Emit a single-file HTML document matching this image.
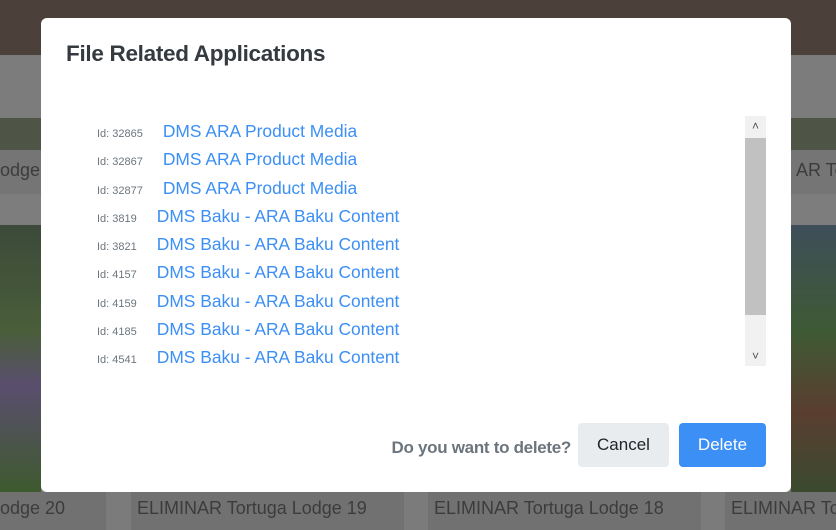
<!DOCTYPE html>
<html><head><style>
*{margin:0;padding:0;box-sizing:border-box}
body{width:836px;height:530px;overflow:hidden;position:relative;background:#7b7b7b;font-family:"Liberation Sans",sans-serif}
.a{position:absolute;white-space:nowrap}
.lbl{position:absolute;top:492px;height:38px;background:#717171;color:#3c3c3c;font-size:18px;line-height:32px;padding-left:6px;white-space:nowrap;overflow:hidden}
.row{position:absolute;left:97px;height:22px;white-space:nowrap}
.row .id{font-size:11px;color:#6c757d;display:inline-block;margin-right:20px}
.row .ln{font-size:17.4px;color:#3b8ff5}
</style></head><body>
<div class="a" style="left:0;top:0;width:836px;height:55px;background:#4b413a"></div>
<div class="a" style="left:0;top:55px;width:836px;height:63px;background:#7c7c7c"></div>
<div class="a" style="left:0;top:118px;width:836px;height:36px;background:#4e5446"></div>
<div class="a" style="left:0;top:150px;width:836px;height:44px;background:#757575"></div>
<div class="a" style="left:0;top:195px;width:836px;height:30px;background:#7d7d7d"></div>
<div class="a" style="left:0;top:225px;width:41px;height:267px;background:linear-gradient(#3c4a3a,#4a5e3a 40%,#5a4e6e 60%,#3e5a2e)"></div>
<div class="a" style="left:791px;top:225px;width:45px;height:267px;background:linear-gradient(#3e4e5a,#3e5a34 40%,#5a3e30 70%,#3a4a2e)"></div>
<div class="a" style="left:0;top:160px;font-size:18px;color:#3c3c3c">odge</div>
<div class="a" style="left:796px;top:160px;font-size:18px;color:#3c3c3c">AR To</div>
<div class="lbl" style="left:0;width:106px;padding-left:0">odge 20</div>
<div class="lbl" style="left:131px;width:273px">ELIMINAR Tortuga Lodge 19</div>
<div class="lbl" style="left:428px;width:273px">ELIMINAR Tortuga Lodge 18</div>
<div class="lbl" style="left:725px;width:111px">ELIMINAR Tortuga Lodge 17</div>

<div class="a" style="left:41px;top:18px;width:750px;height:474px;background:#fff;border-radius:6px">
  <div class="a" style="left:25px;top:23px;font-size:22.5px;font-weight:bold;color:#343a40;letter-spacing:-0.3px">File Related Applications</div>
  <div class="a" style="left:704px;top:98px;width:21px;height:250px;background:#f1f1f1">
    <div class="a" style="left:0;top:22px;width:21px;height:177px;background:#c1c1c1"></div>
    <div class="a" style="left:0;top:0;width:21px;height:20px;text-align:center;font-size:12px;color:#505050;line-height:20px">&#x2C4;</div>
    <div class="a" style="left:0;bottom:0;width:21px;height:20px;text-align:center;font-size:12px;color:#505050;line-height:20px">&#x2C5;</div>
  </div>
</div>
<div class="row" style="top:121px"><span class="id">Id: 32865</span><span class="ln">DMS ARA Product Media</span></div>
<div class="row" style="top:149px"><span class="id">Id: 32867</span><span class="ln">DMS ARA Product Media</span></div>
<div class="row" style="top:178px"><span class="id">Id: 32877</span><span class="ln">DMS ARA Product Media</span></div>
<div class="row" style="top:206px"><span class="id">Id: 3819</span><span class="ln">DMS Baku - ARA Baku Content</span></div>
<div class="row" style="top:234px"><span class="id">Id: 3821</span><span class="ln">DMS Baku - ARA Baku Content</span></div>
<div class="row" style="top:262px"><span class="id">Id: 4157</span><span class="ln">DMS Baku - ARA Baku Content</span></div>
<div class="row" style="top:291px"><span class="id">Id: 4159</span><span class="ln">DMS Baku - ARA Baku Content</span></div>
<div class="row" style="top:319px"><span class="id">Id: 4185</span><span class="ln">DMS Baku - ARA Baku Content</span></div>
<div class="row" style="top:347px"><span class="id">Id: 4541</span><span class="ln">DMS Baku - ARA Baku Content</span></div>

<div class="a" style="right:265px;top:438px;font-size:17px;font-weight:bold;color:#6c757d;letter-spacing:-0.3px">Do you want to delete?</div>
<div class="a" style="left:578px;top:423px;width:91px;height:44px;background:#e9ecef;border-radius:4px;color:#212529;font-size:17px;text-align:center;line-height:44px">Cancel</div>
<div class="a" style="left:679px;top:423px;width:87px;height:44px;background:#3b8ff5;border-radius:4px;color:#fff;font-size:17px;text-align:center;line-height:44px">Delete</div>
</body></html>
